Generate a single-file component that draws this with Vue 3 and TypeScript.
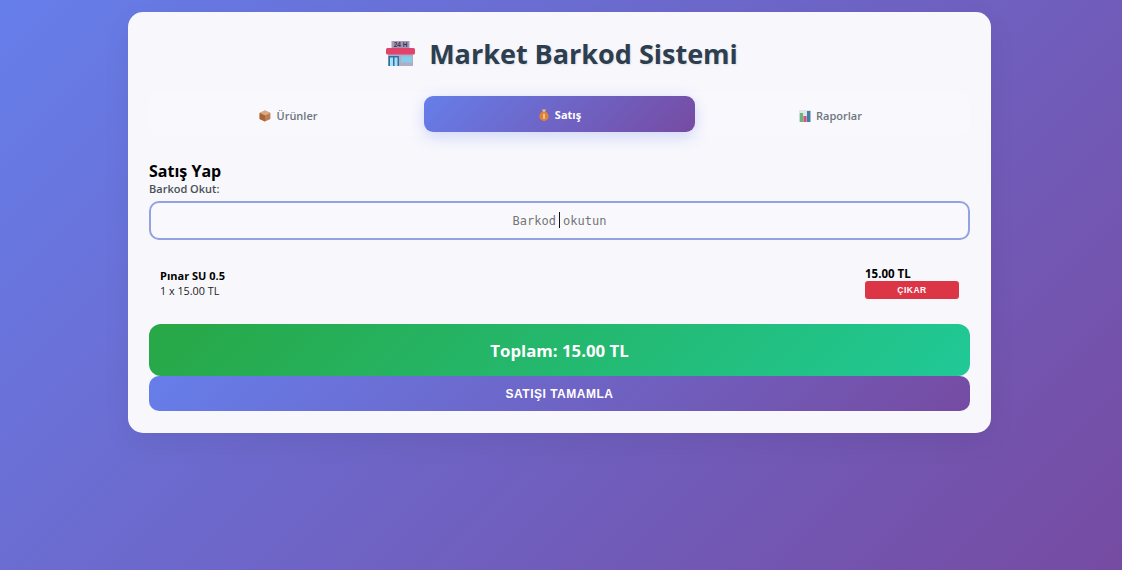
<script setup lang="ts">
import { ref } from 'vue';

interface Tab {
    id: string;
    label: string;
}

interface CartItem {
    name: string;
    quantity: number;
    price: number;
}

const tabs: Tab[] = [
    { id: 'products', label: 'Ürünler' },
    { id: 'sales', label: 'Satış' },
    { id: 'reports', label: 'Raporlar' }
];

const activeTab = ref('sales');
const barcode = ref('');
const cart = ref<CartItem[]>([{ name: 'Pınar SU 0.5', quantity: 1, price: 15 }]);

const lineTotal = (item: CartItem) => (item.quantity * item.price).toFixed(2);
const cartTotal = () => cart.value.reduce((sum, item) => sum + item.quantity * item.price, 0).toFixed(2);
</script>

<template>
    <div class="page">
        <main class="card">
            <h1 class="title">
                <svg class="store-icon" viewBox="0 0 29 25" aria-hidden="true">
                    <rect x="5.5" y="0" width="18" height="8" fill="#a99bb8" />
                    <rect x="2" y="13" width="25" height="12" fill="#aeadc4" />
                    <rect x="0" y="7" width="29" height="6.5" rx="1.5" fill="#e0436b" />
                    <rect x="2.5" y="15" width="10.5" height="10" fill="#2f6fa8" />
                    <rect x="4" y="16.5" width="3" height="8.5" fill="#a6e0f4" />
                    <rect x="8.5" y="16.5" width="3" height="8.5" fill="#a6e0f4" />
                    <rect x="15" y="15.5" width="11" height="6" fill="#83cdea" />
                    <text x="14.5" y="6.4" text-anchor="middle" class="store-text">24 H</text>
                </svg>
                <span>Market Barkod Sistemi</span>
            </h1>

            <nav class="tabs">
                <button
                    v-for="tab in tabs"
                    :key="tab.id"
                    class="tab"
                    :class="{ active: activeTab === tab.id }"
                    @click="activeTab = tab.id"
                >
                    <svg v-if="tab.id === 'products'" class="tab-icon" viewBox="0 0 12 12" aria-hidden="true">
                        <path d="M6 .4 11.4 3v6L6 11.6.6 9V3z" fill="#bd7f52" />
                        <path d="M6 .4 11.4 3 6 5.6.6 3z" fill="#dcaa82" />
                        <path d="M6 5.6v6L.6 9V3z" fill="#a5653c" />
                    </svg>
                    <svg v-else-if="tab.id === 'sales'" class="tab-icon" viewBox="0 0 12 12" aria-hidden="true">
                        <path d="M4.2.4h3.6L7.1 3.2H4.9z" fill="#eec08e" />
                        <circle cx="6" cy="7.2" r="4.7" fill="#e0803a" />
                        <rect x="5.3" y="4.8" width="1.4" height="5" fill="#fbe3a0" />
                    </svg>
                    <svg v-else class="tab-icon" viewBox="0 0 12 12" aria-hidden="true">
                        <rect x="0" y="0" width="12" height="12" fill="#dfe6e6" />
                        <rect x=".8" y="3" width="3.2" height="9" fill="#67b77d" />
                        <rect x="4.4" y="6" width="3.2" height="6" fill="#d8507c" />
                        <rect x="8" y="1" width="3.4" height="11" fill="#3f7fa8" />
                    </svg>
                    {{ tab.label }}
                </button>
            </nav>

            <section>
                <h2 class="section-title">Satış Yap</h2>
                <label class="field-label" for="barcode">Barkod Okut:</label>
                <div class="input-wrap">
                    <input id="barcode" v-model="barcode" class="barcode-input" placeholder="Barkod okutun" />
                    <span class="caret"></span>
                </div>

                <div class="cart">
                    <div v-for="item in cart" :key="item.name" class="cart-item">
                        <div>
                            <div class="item-name">{{ item.name }}</div>
                            <div class="item-detail">{{ item.quantity }} x {{ item.price.toFixed(2) }} TL</div>
                        </div>
                        <div class="item-side">
                            <div class="item-total">{{ lineTotal(item) }} TL</div>
                            <button class="remove-btn">ÇIKAR</button>
                        </div>
                    </div>
                </div>

                <div class="total">Toplam: {{ cartTotal() }} TL</div>
                <button class="complete-btn">SATIŞI TAMAMLA</button>
            </section>
        </main>
    </div>
</template>

<style>
html,
body {
    margin: 0;
    padding: 0;
}
</style>

<style scoped>
.page {
    box-sizing: border-box;
    height: 570px;
    overflow: hidden;
    padding-top: 12px;
    background: linear-gradient(135deg, #667eea 0%, #764ba2 100%);
    font-family: "Open Sans", "Noto Sans", sans-serif;
}

.card {
    box-sizing: border-box;
    width: 863px;
    height: 421px;
    margin-left: 128px;
    padding: 21px;
    border-radius: 15px;
    background: #f7f7fc;
    box-shadow: 0 10px 30px rgba(0, 0, 0, 0.06);
}

.title {
    display: flex;
    align-items: center;
    justify-content: center;
    gap: 14px;
    box-sizing: border-box;
    height: 42px;
    margin: 0 0 17px;
    padding: 0 0 2px 5px;
    color: #2c3e50;
    font-size: 27px;
    font-weight: 700;
    text-shadow: 1px 1px 2px rgba(0, 0, 0, 0.1);
}

.store-icon {
    width: 29px;
    height: 25px;
}

.store-text {
    fill: #3b3550;
    font-family: "Liberation Sans", sans-serif;
    font-size: 6.5px;
    font-weight: 700;
}

.tabs {
    display: flex;
    gap: 0;
    padding: 4px;
    margin-bottom: 24px;
    border-radius: 12px;
    background: #f9f9fd;
}

.tab {
    flex: 1;
    display: flex;
    align-items: center;
    justify-content: center;
    gap: 5px;
    box-sizing: border-box;
    height: 36px;
    padding: 3px 0 0;
    border: none;
    border-radius: 9px;
    background: transparent;
    color: #6c757d;
    font-family: inherit;
    font-size: 11px;
    font-weight: 600;
    cursor: pointer;
}

.tab.active {
    padding-top: 1px;
    background: linear-gradient(135deg, #667eea 0%, #764ba2 100%);
    color: #fff;
    font-weight: 700;
    box-shadow: 0 4px 15px rgba(102, 126, 234, 0.3);
}

.tab-icon {
    width: 12px;
    height: 12px;
}

.section-title {
    margin: 0;
    color: #000;
    font-size: 16px;
    font-weight: 700;
    line-height: 22px;
}

.field-label {
    display: block;
    margin-bottom: 5px;
    color: #495057;
    font-size: 11px;
    font-weight: 600;
    line-height: 14px;
}

.input-wrap {
    position: relative;
}

.barcode-input {
    display: block;
    box-sizing: border-box;
    width: 100%;
    height: 39px;
    border: 2px solid #93a2e0;
    border-radius: 10px;
    outline: none;
    background: #f9f9fd;
    color: #333;
    font-family: "DejaVu Sans Mono", "Liberation Mono", monospace;
    font-size: 12px;
    text-align: center;
}

.barcode-input::placeholder {
    color: #757575;
    opacity: 1;
}

.caret {
    position: absolute;
    left: 410px;
    top: 11px;
    width: 1px;
    height: 16px;
    background: #111;
}

.cart {
    margin-top: 15px;
    margin-bottom: 9px;
    border-radius: 8px;
    background: #f8f8fc;
}

.cart-item {
    display: flex;
    align-items: center;
    justify-content: space-between;
    box-sizing: border-box;
    height: 60px;
    padding: 0 11px 4px;
}

.item-name {
    color: #000;
    font-size: 11px;
    font-weight: 700;
    line-height: 15px;
}

.item-detail {
    color: #222;
    font-size: 10.8px;
    line-height: 15px;
}

.item-side {
    width: 94px;
    margin-top: -1px;
}

.item-total {
    color: #000;
    font-size: 11.5px;
    font-weight: 700;
    line-height: 14px;
}

.remove-btn {
    display: block;
    width: 94px;
    height: 18px;
    padding: 0;
    border: none;
    border-radius: 3px;
    background: #dc3545;
    color: #fff;
    font-family: "Liberation Sans", sans-serif;
    font-size: 8.5px;
    font-weight: 700;
    letter-spacing: 0.5px;
}

.total {
    display: flex;
    align-items: center;
    justify-content: center;
    box-sizing: border-box;
    height: 52px;
    padding-top: 1px;
    border-radius: 12px;
    background: linear-gradient(135deg, #28a745 0%, #20c997 100%);
    color: #fff;
    font-size: 16.8px;
    font-weight: 700;
}

.complete-btn {
    display: block;
    width: 100%;
    height: 35px;
    padding: 0;
    border: none;
    border-radius: 10px;
    background: linear-gradient(135deg, #667eea 0%, #764ba2 100%);
    color: #fff;
    font-family: "Liberation Sans", sans-serif;
    font-size: 12px;
    font-weight: 700;
    letter-spacing: 0.5px;
}
</style>
